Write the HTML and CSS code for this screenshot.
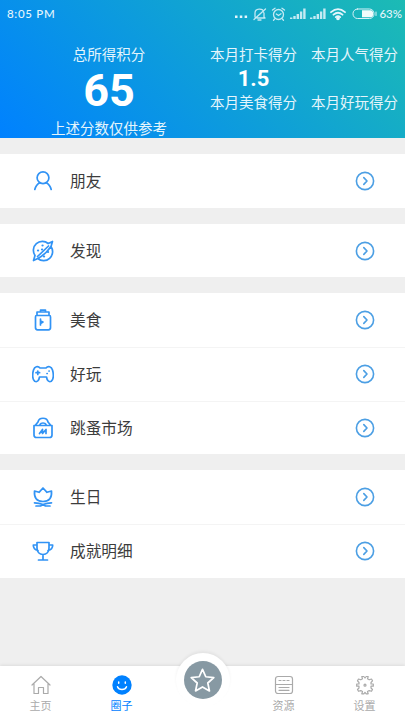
FILE: index.html
```
<!DOCTYPE html>
<html lang="zh-CN">
<head>
<meta charset="utf-8">
<meta name="viewport" content="width=device-width, initial-scale=1">
<title>圈子</title>
<link rel="stylesheet" href="styles.css">
</head>
<body>
<svg class="sprite" aria-hidden="true">
  <symbol id="go" viewBox="0 0 20 20"><circle cx="10" cy="10" r="8.6"/><path d="M8.8 6.6 12 10l-3.2 3.4"/></symbol>
</svg>
<div class="app">
  <header class="hero">
    <div class="status">
      <span class="time">8:05 PM</span>
      <div class="signals">
        <svg class="dots" width="14" height="14" viewBox="0 0 14 14"><path d="M1 8.500h2.500V11H1zM5.800 8.500h2.500V11H5.800zM10.600 8.500h2.500V11h-2.500z"/></svg>
        <svg class="line" width="15" height="14" viewBox="0 0 15 14"><path d="M3 10V6c0-5 8-5 8.500-1M12 6v4l1 1H5M2 12.500 13.500 2M6 13h3"/></svg>
        <svg class="line" width="15" height="14" viewBox="0 0 15 14"><circle cx="7.500" cy="7.500" r="5"/><path d="M1.500 3 4 1.200M13.500 3 11 1.200M5.300 7 7.500 8.500 10 6.800M3.500 12l-1 1.300M11.500 12l1 1.300"/></svg>
        <svg class="bars" width="16" height="14" viewBox="0 0 16 14"><path d="M0 10.500h2.400V12H0zM3.300 9h2.400v3H3.300zM6.600 7H9v5H6.600zM9.900 4.500h2.400V12H9.900zM13.200 1.500h2.400V12h-2.400z"/></svg>
        <svg class="bars" width="16" height="14" viewBox="0 0 16 14"><path d="M0 10.500h2.400V12H0zM3.300 9h2.400v3H3.300zM6.600 7H9v5H6.600zM9.900 4.500h2.400V12H9.900zM13.200 1.500h2.400V12h-2.400z"/></svg>
        <svg class="wifi" width="16" height="14" viewBox="0 0 16 14"><path d="M1 5.200Q8-1 15 5.200M3.500 7.700q4.500-4 9 0M5.800 10.100q2.200-2 4.400 0"/><circle cx="8" cy="11.300" r="1"/></svg>
        <svg class="battery" width="25" height="14" viewBox="0 0 25 14"><rect x="1" y="2" width="21" height="9.500" rx="4.500"/><path class="tip" d="M24 5v3.500"/><path class="charge" d="M10 3.300h8.500q2.700 0 2.700 3.500t-2.700 3.500H10z"/></svg>
        <span class="percent">63%</span>
      </div>
    </div>
    <div class="scores">
      <div class="total">
        <span class="label">总所得积分</span>
        <strong class="points">65</strong>
        <span class="label">上述分数仅供参考</span>
      </div>
      <div class="monthly">
        <div class="metric"><span class="label">本月打卡得分</span><strong class="value">1.5</strong></div>
        <div class="metric"><span class="label">本月人气得分</span></div>
        <div class="metric"><span class="label">本月美食得分</span></div>
        <div class="metric"><span class="label">本月好玩得分</span></div>
      </div>
    </div>
  </header>

  <main class="groups">
    <section class="group">
      <a class="row"><svg class="icon" viewBox="0 0 22 22"><circle cx="11" cy="7.700" r="5.900"/><path d="M7.800 12.700c-2.600 1.300-4.200 3.300-5 6.800M14.200 12.700c2.600 1.300 4.200 3.300 5 6.800"/></svg><span class="name">朋友</span><svg class="go"><use href="#go"/></svg></a>
    </section>
    <section class="group">
      <a class="row"><svg class="icon" viewBox="0 0 22 22"><path d="M16.200 3.500A9 9 0 0 0 3 15.500M5.800 18.500A9 9 0 0 0 19 6.500M16.200 3.500 20.500 1.500 19 6.500C16 11 11.500 15.500 5.800 18.500L1.500 20.500 3 15.500M5.500 16.500 16.500 6"/><path class="spots" d="M10.500 5.500h.1M6 10.500h.1M10 9.500h.1M12 16.500h.1M16 12h.1"/></svg><span class="name">发现</span><svg class="go"><use href="#go"/></svg></a>
    </section>
    <section class="group">
      <a class="row"><svg class="icon" viewBox="0 0 22 22"><path d="M5 6V3h12v3M8.500 3V1.200h5V3M4.500 6.500h13q1 0 1 1.500v10.500q0 2.300-2 2.300h-11q-2 0-2-2.300V8q0-1.500 1-1.500z"/><path d="M8.500 10v6M8.500 12l2.500 1-2.500 1.500"/></svg><span class="name">美食</span><svg class="go"><use href="#go"/></svg></a>
      <a class="row"><svg class="icon" viewBox="0 0 22 22"><path d="M8 5C6 2.500 2.500 3.500 1.500 7 .3 11 .2 16.500 2.700 18.200 5.500 19.500 7 17 7.500 14h7c.5 3 2 5.500 4.800 4.200 2.500-1.700 2.400-7.200 1.200-11.200C19.500 3.500 16 2.500 14 5zM5.800 8v3.500M4 9.700h3.600M15 10.500h.2M17 8h.2"/></svg><span class="name">好玩</span><svg class="go"><use href="#go"/></svg></a>
      <a class="row"><svg class="icon" viewBox="0 0 22 22"><path d="M2 8.500h18V18q0 2.500-2.500 2.500h-13Q2 20.500 2 18zM3.500 8 6 5c1-5 9-5 10 0l2.500 3M8 7.500c1-2 5-2 6 0M7.500 16.500l3-4v4l3.500-4v4"/></svg><span class="name">跳蚤市场</span><svg class="go"><use href="#go"/></svg></a>
    </section>
    <section class="group">
      <a class="row"><svg class="icon" viewBox="0 0 22 22"><path d="M2.500 5 7 6.300 11 2l4 4.300L19.500 5c.5 6.500-2 10.500-8.500 10.500S2 11.500 2.500 5zM2.500 16.800c3 0 5 .2 8.500 1.700 3.500-1.500 5.500-1.700 8.500-1.700M4 20h4.500l2.500-1.500L13.500 20H18"/></svg><span class="name">生日</span><svg class="go"><use href="#go"/></svg></a>
      <a class="row"><svg class="icon" viewBox="0 0 22 22"><path d="M5 2.500h12V8c0 4-2.500 6.500-6 6.500S5 12 5 8zM5 5H1.300c0 3 1.700 5 4.700 5.500M17 5h3.700c0 3-1.700 5-4.700 5.500M11 14.500v5M6.500 20h9"/></svg><span class="name">成就明细</span><svg class="go"><use href="#go"/></svg></a>
    </section>
  </main>

  <nav class="tabs">
    <a class="tab"><svg class="tab-icon" viewBox="0 0 20 20"><path d="M1 10 10 1.500l9 8.500M3 9v9.500h4.500v-6h5v6H17V9"/></svg><span>主页</span></a>
    <a class="tab active"><svg class="tab-icon" viewBox="0 0 20 20"><circle class="face" cx="10" cy="10" r="9.700"/><path class="smile" d="M5.500 11.800c1.400 3.600 7.600 3.600 9 0M6.700 7v1.300M13.300 7v1.300"/></svg><span>圈子</span></a>
    <a class="tab center"><span class="halo"><span class="disc"><svg class="star" viewBox="0 0 28 28"><path d="m14 2.500 3.400 7.600 8.300.9-6.200 5.600 1.700 8.200L14 20.700l-7.200 4.100 1.700-8.200L2.300 11l8.300-.9z"/></svg></span></span></a>
    <a class="tab"><svg class="tab-icon" viewBox="0 0 20 20"><rect x="1.500" y="1.500" width="17" height="17" rx="2.500"/><path d="M5 5.500h2M9 5.500h2M13 5.500h2M1.500 9.500h17M5 12.500h10M5 15.300h10"/></svg><span>资源</span></a>
    <a class="tab"><svg class="tab-icon" viewBox="0 0 20 20"><path d="m7.500 3.800-.7-2.300h2L10 3l1.200-1.500h2l-.7 2.300 1.700 1 2.300-.8 1 1.800-1.500 1.700v1.500h2.300v2.200H16V13l1.500 1.500-1 1.800-2.300-.7-1.700 1 .7 2.200h-2L10 17.300l-1.200 1.500h-2l.7-2.200-1.700-1-2.300.7-1-1.800L4 13v-1.800H1.700V9H4V7.500L2.500 5.800l1-1.800 2.300.8z"/><circle cx="10" cy="10.200" r="1"/></svg><span>设置</span></a>
  </nav>
</div>
</body>
</html>
```
FILE: styles.css
```
* { box-sizing: border-box; }

body {
  margin: 0;
  font-family: Roboto, "Noto Sans CJK SC", sans-serif;
  background: #efefef;
}

svg {
  display: block;
  flex: none;
  fill: none;
  stroke: currentColor;
  stroke-linecap: round;
  stroke-linejoin: round;
}

.sprite { display: none; }

.app {
  display: flex;
  flex-direction: column;
  height: 720px;
  overflow: hidden;
}

.hero {
  height: 138px;
  color: #e4f5fc;
  background: linear-gradient(45deg, #0081ff, #1cbbb4);
}

.status {
  display: flex;
  align-items: center;
  justify-content: space-between;
  height: 28px;
  padding: 0 3px 0 7px;
}

.time {
  font: 500 11.5px/28px Lato, sans-serif;
  letter-spacing: .7px;
}

.signals {
  display: flex;
  align-items: center;
  gap: 4px;
}

.dots, .bars { fill: currentColor; stroke: none; }
.bars { opacity: .85; }
.line { stroke-width: 1.3; opacity: .85; }
.wifi { stroke-width: 1.8; }
.battery { margin-left: 2px; opacity: .95; }
.battery .charge { fill: #fff; stroke: none; }

.percent {
  margin-left: -2px;
  font: 500 11.5px/28px Lato, sans-serif;
}

.scores {
  display: grid;
  grid-template-columns: 203px 202px;
  padding-top: 17.5px;
}

.total {
  display: flex;
  flex-direction: column;
  align-items: center;
  padding-left: 15px;
}

.label {
  font-size: 14.5px;
  line-height: 20px;
  white-space: nowrap;
}

.points {
  height: 54px;
  color: #fff;
  font-size: 45px;
  line-height: 49px;
}

.monthly {
  display: grid;
  grid-template-columns: 101px 101px;
  grid-template-rows: 48px 20px;
}

.metric {
  display: flex;
  flex-direction: column;
  align-items: center;
}

.value {
  color: #fff;
  font-size: 22px;
  line-height: 25px;
}

.groups {
  display: flex;
  flex: 1;
  flex-direction: column;
  gap: 16px;
  padding-top: 16px;
}

.group { background: #fff; }

.row {
  display: flex;
  align-items: center;
  height: 53.7px;
  padding: 0 30px 0 32px;
}

.row + .row { border-top: 1px solid #f4f4f4; }

.icon {
  width: 22px;
  height: 22px;
  color: #3193f5;
  stroke-width: 1.7;
}

.spots { stroke-width: 2.2; }

.name {
  flex: 1;
  margin-left: 16px;
  padding-top: 2px;
  color: #3c3c3c;
  font-size: 15.7px;
  line-height: 24px;
}

.go {
  width: 20px;
  height: 20px;
  color: #4c9fe4;
  stroke-width: 1.6;
}

.tabs {
  display: grid;
  grid-template-columns: repeat(5, 1fr);
  height: 54px;
  background: #fff;
  box-shadow: 0 -1px 3px rgba(0, 0, 0, .08);
}

.tab {
  display: flex;
  flex-direction: column;
  align-items: center;
  padding-top: 9px;
  color: #aaa;
  font-size: 11px;
  line-height: 16px;
}

.tab-icon {
  width: 20px;
  height: 20px;
  margin-bottom: 4px;
  stroke-width: 1.2;
}

.active { color: #0081ff; }
.face { fill: #0081ff; stroke: none; }
.smile { stroke: #fff; stroke-width: 1.5; }
.center { padding: 0; }

.halo {
  display: flex;
  align-items: center;
  justify-content: center;
  width: 54px;
  height: 54px;
  margin-top: -13px;
  border-radius: 50%;
  background: #fff;
  box-shadow: 0 -2px 3px rgba(0, 0, 0, .05);
}

.disc {
  display: flex;
  align-items: center;
  justify-content: center;
  width: 38px;
  height: 38px;
  border-radius: 50%;
  color: #fff;
  background: #8799a3;
}

.star {
  width: 27px;
  height: 27px;
  stroke-width: 1.8;
}
```
